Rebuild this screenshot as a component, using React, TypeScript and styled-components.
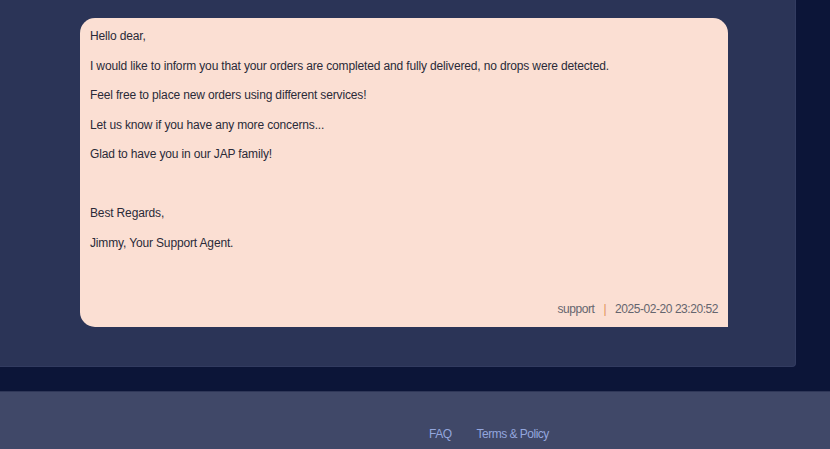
import React from 'react';
import styled, { createGlobalStyle } from 'styled-components';

const GlobalStyle = createGlobalStyle`
  html, body {
    margin: 0;
    padding: 0;
    background-color: #0c1538;
    font-family: 'Liberation Sans', Arial, sans-serif;
  }
`;

const lines = [
  'Hello dear,',
  'I would like to inform you that your orders are completed and fully delivered, no drops were detected.',
  'Feel free to place new orders using different services!',
  'Let us know if you have any more concerns...',
  'Glad to have you in our JAP family!',
  '',
  'Best Regards,',
  'Jimmy, Your Support Agent.',
];

const App = () => {
  return (
    <>
      <GlobalStyle />
      <Page>
        <Panel>
          <Message>
            {lines.map((line, i) => (
              <Line key={i}>{line || '\u00a0'}</Line>
            ))}
            <Meta>
              <span>support</span>
              <Divider>|</Divider>
              <span>2025-02-20 23:20:52</span>
            </Meta>
          </Message>
        </Panel>
        <Footer>
          <FooterLink href="#">FAQ</FooterLink>
          <FooterLink href="#">Terms &amp; Policy</FooterLink>
        </Footer>
      </Page>
    </>
  );
};

export default App;

const Page = styled.div`
  display: flex;
  flex-direction: column;
  min-height: 449px;
`;

const Panel = styled.div`
  width: 796px;
  box-sizing: border-box;
  padding: 18px 68px 39px 80px;
  background-color: #2b3457;
  border-bottom-right-radius: 4px;
  border-right: 1px solid #323b60;
  border-bottom: 1px solid #323b60;
`;

const Message = styled.div`
  width: 648px;
  box-sizing: border-box;
  padding: 11px 10px 10px 10px;
  background-color: #fbdfd3;
  border-radius: 15px 15px 0 15px;
  color: #2a2a38;
  font-size: 12px;
  letter-spacing: -0.15px;
`;

const Line = styled.p`
  margin: 0 0 14.5px 0;
  line-height: 15px;
  white-space: nowrap;
`;

const Meta = styled.div`
  display: flex;
  justify-content: flex-end;
  gap: 9px;
  margin-top: 51px;
  line-height: 15px;
  letter-spacing: -0.45px;
  color: #65656e;
`;

const Divider = styled.span`
  color: #e0925c;
`;

const Footer = styled.footer`
  margin-top: 24px;
  flex: 1;
  display: flex;
  gap: 25px;
  padding: 35px 0 0 429px;
  background-color: #404868;
  border-top: 1px solid #2f3758;
`;

const FooterLink = styled.a`
  color: #93a6de;
  font-size: 12px;
  line-height: 15px;
  letter-spacing: -0.5px;
  text-decoration: none;
`;
